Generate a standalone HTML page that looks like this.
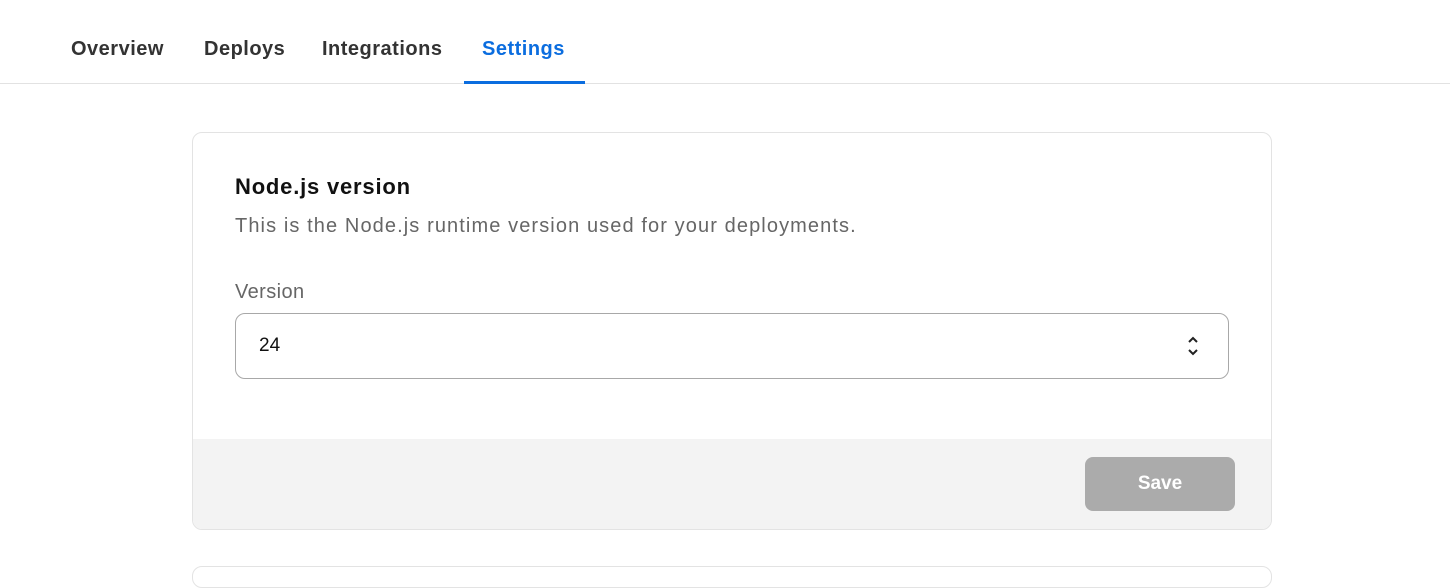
<!DOCTYPE html><html><head><style>
body{margin:0;width:1450px;height:571px;overflow:hidden;background:#fff;font-family:"Liberation Sans",sans-serif;position:relative}
.nav{position:absolute;left:0;top:0;width:1450px;height:83px;border-bottom:1px solid #e2e2e2}
.t{position:absolute;top:38px;font-size:20px;font-weight:bold;color:#333;letter-spacing:0.5px}
.card{position:absolute;left:192px;top:132px;width:1078px;height:396px;border:1px solid #e3e3e3;border-radius:10px;overflow:hidden}
.foot{position:absolute;left:0;top:306px;width:100%;height:90px;background:#f3f3f3}
</style></head><body>
<div class="nav">
<div class="t" style="left:71px">Overview</div>
<div class="t" style="left:204px">Deploys</div>
<div class="t" style="left:322px">Integrations</div>
<div class="t" style="left:482px;color:#0b6ddf">Settings</div>
<div style="position:absolute;left:464px;top:81px;width:121px;height:3px;background:#0b6ddf"></div>
</div>
<div class="card">
<div style="position:absolute;left:42px;top:41px;font-size:22px;font-weight:bold;color:#111;letter-spacing:0.8px">Node.js version</div>
<div style="position:absolute;left:42px;top:82px;font-size:20px;color:#666;letter-spacing:1.1px">This is the Node.js runtime version used for your deployments.</div>
<div style="position:absolute;left:42px;top:148px;font-size:20px;color:#666;letter-spacing:0.4px">Version</div>
<div style="position:absolute;left:42px;top:180px;width:992px;height:64px;border:1px solid #a8a8a8;border-radius:10px">
<div style="position:absolute;left:23px;top:21px;font-size:19px;color:#111">24</div>
<svg style="position:absolute;left:950px;top:21px" width="14" height="22" viewBox="0 0 14 22"><path d="M3 7l4-4 4 4M3 15l4 4 4-4" fill="none" stroke="#222" stroke-width="2"/></svg>
</div>
<div class="foot"><div style="position:absolute;left:892px;top:18px;width:150px;height:54px;background:#ababab;border-radius:8px;color:#fff;font-weight:bold;font-size:19px;text-align:center;line-height:54px">Save</div></div>
</div>
<div style="position:absolute;left:192px;top:566px;width:1078px;height:20px;border:1px solid #e3e3e3;border-radius:10px"></div>
</body></html>
